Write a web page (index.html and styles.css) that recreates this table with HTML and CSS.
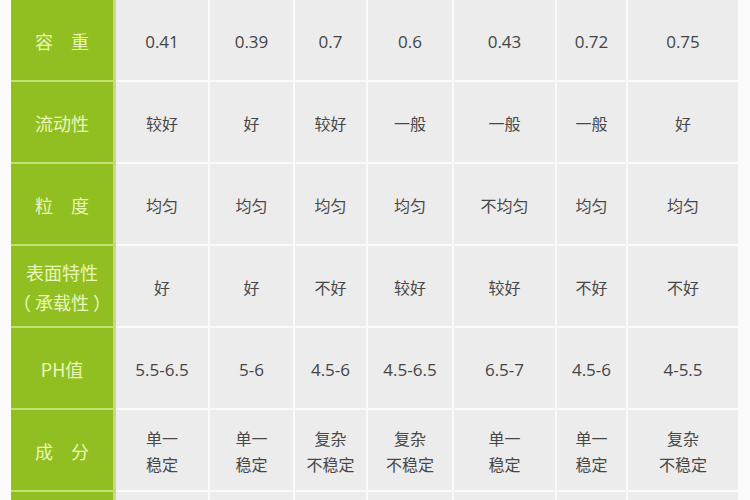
FILE: index.html
```html
<!DOCTYPE html>
<html lang="zh">
<head>
<meta charset="utf-8">
<link rel="stylesheet" href="styles.css">
</head>
<body>
<div class="table">
  <div class="row">
    <div class="head">容　重</div>
    <div class="cell num">0.41</div><div class="cell num">0.39</div><div class="cell num">0.7</div><div class="cell num">0.6</div><div class="cell num">0.43</div><div class="cell num">0.72</div><div class="cell num">0.75</div>
  </div>
  <div class="row">
    <div class="head">流动性</div>
    <div class="cell">较好</div><div class="cell">好</div><div class="cell">较好</div><div class="cell">一般</div><div class="cell">一般</div><div class="cell">一般</div><div class="cell">好</div>
  </div>
  <div class="row">
    <div class="head">粒　度</div>
    <div class="cell">均匀</div><div class="cell">均匀</div><div class="cell">均匀</div><div class="cell">均匀</div><div class="cell">不均匀</div><div class="cell">均匀</div><div class="cell">均匀</div>
  </div>
  <div class="row">
    <div class="head two">表面特性<br>（&nbsp;承载性&nbsp;）</div>
    <div class="cell">好</div><div class="cell">好</div><div class="cell">不好</div><div class="cell">较好</div><div class="cell">较好</div><div class="cell">不好</div><div class="cell">不好</div>
  </div>
  <div class="row">
    <div class="head">PH值</div>
    <div class="cell num">5.5-6.5</div><div class="cell num">5-6</div><div class="cell num">4.5-6</div><div class="cell num">4.5-6.5</div><div class="cell num">6.5-7</div><div class="cell num">4.5-6</div><div class="cell num">4-5.5</div>
  </div>
  <div class="row">
    <div class="head">成　分</div>
    <div class="cell two">单一<br>稳定</div><div class="cell two">单一<br>稳定</div><div class="cell two">复杂<br>不稳定</div><div class="cell two">复杂<br>不稳定</div><div class="cell two">单一<br>稳定</div><div class="cell two">单一<br>稳定</div><div class="cell two">复杂<br>不稳定</div>
  </div>
  <div class="row">
    <div class="head"></div>
    <div class="cell"></div><div class="cell"></div><div class="cell"></div><div class="cell"></div><div class="cell"></div><div class="cell"></div><div class="cell"></div>
  </div>
</div>
</body>
</html>
```

FILE: styles.css
```css
html, body {
  margin: 0;
  padding: 0;
  background: #fbfbfb;
  overflow: hidden;
  width: 750px;
  height: 500px;
}
.table {
  margin-left: 11px;
  margin-top: 0;
  width: 727px;
  font-family: "Open Sans", "Noto Sans CJK SC", sans-serif;
}
.row {
  display: grid;
  grid-template-columns: 105px 94px 85px 73px 86px 103px 71px 110px;
  height: 82px;
}
.head {
  background: #91bf22;
  border-right: 3px solid #c2e073;
  border-bottom: 2px solid #c2e073;
  color: #e9f7b8;
  font-family: "Noto Sans CJK SC", sans-serif;
  font-size: 18px;
  display: flex;
  align-items: center;
  justify-content: center;
  text-align: center;
  padding-top: 1px;
  box-sizing: border-box;
  line-height: 30px;
}
.cell {
  background: #ececec;
  border-right: 2px solid #fafafa;
  border-bottom: 2px solid #fafafa;
  box-sizing: border-box;
  display: flex;
  align-items: center;
  justify-content: center;
  text-align: center;
  padding-top: 2px;
  color: #474747;
  font-family: "Noto Sans CJK SC", sans-serif;
  font-size: 16px;
}
.cell:last-child {
  border-right: none;
}
.cell.num {
  font-family: "Open Sans", sans-serif;
  font-size: 17px;
  color: #444;
}
.cell.two {
  line-height: 26px;
  font-size: 16px;
}
```
